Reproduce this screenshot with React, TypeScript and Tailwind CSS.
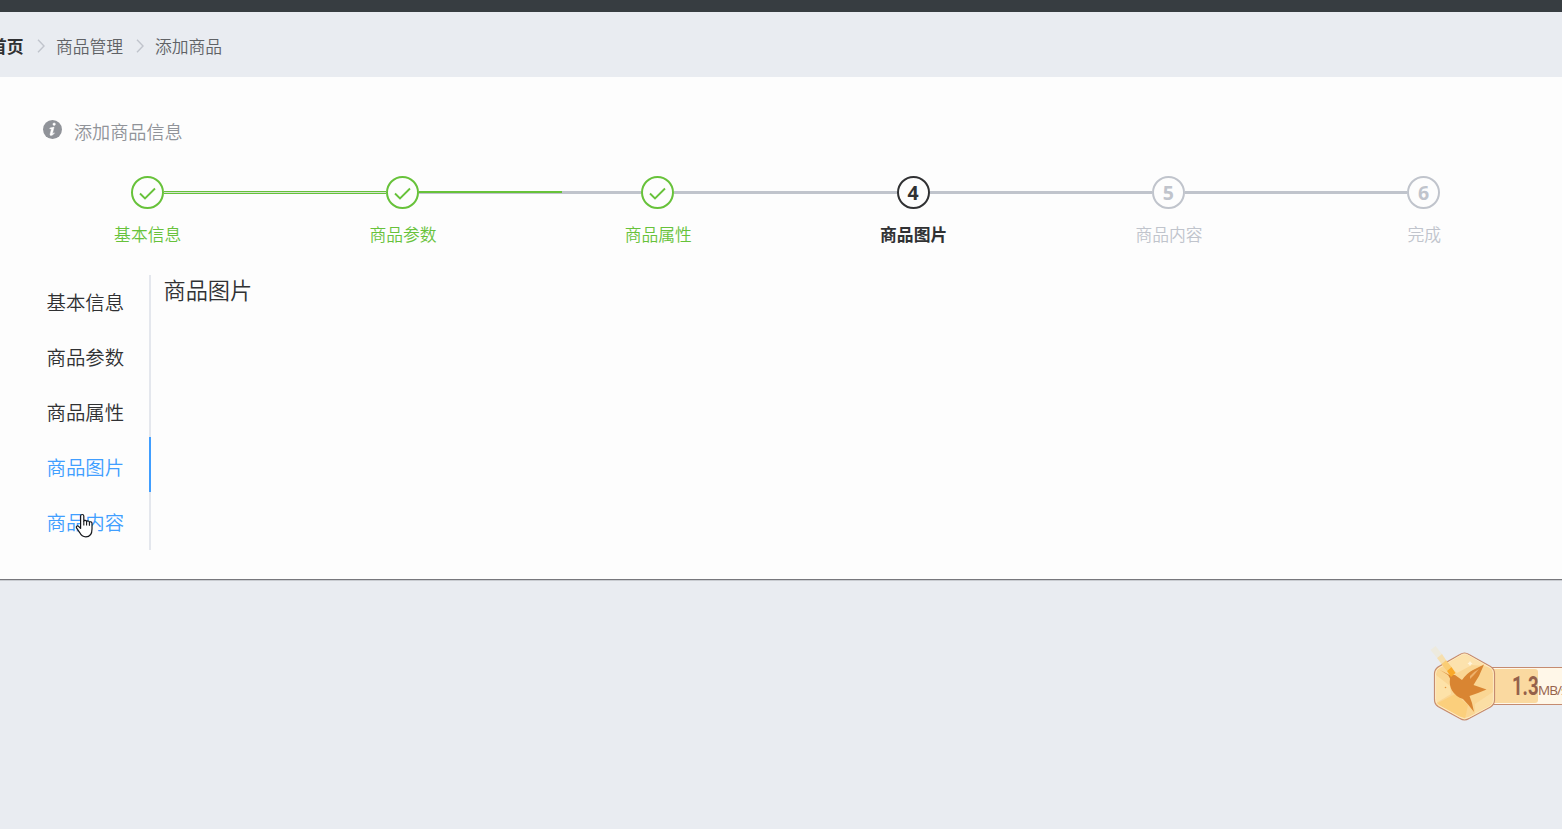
import type { ReactNode } from 'react';

type StepStatus = 'done' | 'active' | 'wait';

const steps: { title: string; status: StepStatus }[] = [
  { title: '基本信息', status: 'done' },
  { title: '商品参数', status: 'done' },
  { title: '商品属性', status: 'done' },
  { title: '商品图片', status: 'active' },
  { title: '商品内容', status: 'wait' },
  { title: '完成', status: 'wait' },
];

const tabs = ['基本信息', '商品参数', '商品属性', '商品图片', '商品内容'];

const circleStyles: Record<StepStatus, string> = {
  done: 'border-[#67c23a] text-[#67c23a]',
  active: 'border-[#303133] text-[#303133]',
  wait: 'border-[#c0c4cc] text-[#c0c4cc]',
};

const titleStyles: Record<StepStatus, string> = {
  done: 'font-[350] text-[#67c23a]',
  active: 'font-bold text-[#303133]',
  wait: 'font-[350] text-[#c0c4cc]',
};

function Chevron() {
  return (
    <svg width="8" height="14" viewBox="0 0 8 14" fill="none" className="shrink-0">
      <path d="M1 .8 7 7 1 13.2" stroke="#c0c4cc" strokeWidth="1.4" />
    </svg>
  );
}

function StepCircle({ status, children }: { status: StepStatus; children: ReactNode }) {
  return (
    <div
      className={`flex h-[33px] w-[33px] shrink-0 items-center justify-center rounded-full border-2 font-['Open_Sans','Noto_Sans',sans-serif] text-[19.5px] font-bold leading-none ${circleStyles[status]}`}
    >
      {children}
    </div>
  );
}

// Connector after step `index`; the second one is still part way through its fill
function StepLine({ index }: { index: number }) {
  return (
    <div className="h-[3px] flex-1 bg-[#c0c4cc]">
      {index === 0 && <div className="h-[3px] border-y border-[#67c23a] bg-[#d5e3d2]" />}
      {index === 1 && <div className="h-[2px] w-[143px] bg-[#67c23a]" />}
    </div>
  );
}

function HandCursor() {
  return (
    <svg width="20" height="26" viewBox="0 0 20 26" className="absolute left-[74px] top-[513px]">
      <path
        d="M6.600 3c0-2 3.200-2 3.200 0v5.200c.3-1.300 2.700-1.100 2.800.5.5-1.200 2.700-.9 2.800.6.7-1 2.600-.5 2.600 1.100v5.600c0 4.500-2 7.900-6.200 7.900-3.300 0-4.700-1.400-6.100-4.300l-3.200-4.700c-.8-1.600.9-2.600 2.100-1.500l2 2Z"
        fill="#fff"
        stroke="#15171c"
        strokeWidth="1.2"
        strokeLinejoin="round"
      />
      <path d="M9.800 8v4.400M12.600 9v3.600M15.400 9.600v3.200" stroke="#15171c" strokeWidth="1.1" />
    </svg>
  );
}

function SpeedWidget() {
  return (
    <div className="absolute left-[1426px] top-[645px] h-[80px] w-[136px] overflow-hidden">
      <div className="absolute left-[64px] top-[22px] flex h-[38px] w-[80px] border-y border-[#c58b70] bg-[#fff7e8] py-px">
        <div className="h-full w-[48px] rounded-r-[3px] bg-[#fad9a0]" />
      </div>
      <div className="absolute left-[86px] top-[28px] flex items-baseline whitespace-nowrap text-[#95614a]">
        <span className="inline-block w-[26px] origin-left scale-x-[0.74] font-['Roboto',sans-serif] text-[25px] font-bold leading-[28px]">
          1.3
        </span>
        <span className="font-['Open_Sans',sans-serif] text-[13.5px] leading-[28px] tracking-[-0.9px]">MB/s</span>
      </div>
      <svg width="72" height="80" viewBox="0 0 72 80" className="absolute left-0 top-0">
        <path
          d="M34 9.600Q38.500 6.400 43 9.600L64.500 21.600Q68.500 24 68.500 28.500V55Q68.500 59.500 64.500 62L43 73.500Q38.500 76.500 34 73.500L12 61.500Q8.500 59 8.500 54.500V29Q8.500 24.500 12 22Z"
          fill="#fad694"
          stroke="#c58b70"
          strokeWidth="1.2"
        />
        <path d="M34 11 38.500 9 65 23 58 21 46 20 31 28 21 19Z" fill="#fce2ad" />
        <path d="M10 30 24 41 25 49 10 58Z" fill="#fde2a8" />
        <path d="M10 59 29 49 42 60 39 74Z" fill="#fbcf7c" />
        <path d="M49 59 67 47 67 58 49 69Z" fill="#fbdea4" />
        <path
          d="M34 10.700Q38.500 7.600 43 10.700L64 22.500Q67.400 24.500 67.400 28.500V55Q67.400 59 64 61L43 72.300Q38.500 75 34 72.300L13 60.500Q9.600 58.500 9.600 54.500V29Q9.600 25 13 23Z"
          fill="none"
          stroke="#fdeac4"
          strokeWidth="1"
        />
        <path
          d="M14 25 23.500 30 29 30 36 35Q41 28 47 25L58 19.500 53 31 47.500 40 60.500 44.500 52 48 43.500 51 46 58 48 67Q42 59 37 54 30 52 26 45.500 23 40 24 33.500L22 30Z"
          fill="#d98532"
        />
        <path d="M4.500 5 9.500 1 16 9 11 13Z" fill="#edeade" />
        <path d="M11 13 16 9 20 15 15.500 19Z" fill="#f6dfae" />
        <path d="M15.500 19 20 15 25.500 22 21 26Z" fill="#facd75" />
        <path d="M21 26 25.500 22 29.500 28 25 32Z" fill="#faa928" />
        <path d="M44 31Q47 27 53 24L48 30 44 34Z" fill="#eeb16b" />
        <path d="m44 16 1 1.500 1.500 1-1.500 1-1 1.500-1-1.500-1.500-1 1.500-1Z" fill="#fff5dc" />
        <circle cx="19.500" cy="42.500" r=".8" fill="#e79a43" />
      </svg>
    </div>
  );
}

export default function App() {
  return (
    <div className="relative h-[829px] w-[1562px] overflow-hidden bg-[#e9ecf1] font-['Noto_Sans_CJK_SC',sans-serif]">
      <header className="h-3 bg-[#373d41]" />

      <nav className="flex h-[65px] items-center whitespace-nowrap pt-[3px] text-[16.8px] font-[350] leading-none text-[#606266]">
        <span className="-ml-[10px] w-[34px] shrink-0 font-bold text-[#303133]">首页</span>
        <span className="ml-[13px] mr-[11px] flex">
          <Chevron />
        </span>
        <span className="w-[67px]">商品管理</span>
        <span className="ml-[13px] mr-[11px] flex">
          <Chevron />
        </span>
        <span>添加商品</span>
      </nav>

      <main className="h-[503px] border-b border-[#77777c] bg-[#fdfdfd] shadow-[0_1px_0_#c9ccd1]">
        {/* Notice */}
        <div className="flex items-center pl-[43px] pt-[42px] text-[#909399]">
          <svg width="19" height="19" viewBox="0 0 19 19" className="mb-[3px] shrink-0">
            <circle cx="9.5" cy="9.5" r="9.5" fill="currentColor" />
            <path
              d="M11.300 2.900a1.300 1.300 0 1 1-.3 2.600 1.300 1.300 0 0 1 .3-2.600ZM6.800 8l4.300-.9-1.600 6.400c-.1.700.5.400 1.600-.8l.4.400c-1.800 2.800-5 3.300-4.400.8l1.300-4.900-1.600-.2Z"
              fill="#fff"
              stroke="#fff"
              strokeWidth=".4"
            />
          </svg>
          <span className="ml-3 text-[18.1px] leading-6 font-[350]">添加商品信息</span>
        </div>

        {/* Steps */}
        <div className="mt-[33px] flex items-center pl-[131px] pr-[122px]">
          {steps.map((step, i) => (
            <div key={step.title} className={i < steps.length - 1 ? 'flex flex-1 items-center' : 'flex items-center'}>
              <StepCircle status={step.status}>
                {step.status === 'done' ? (
                  <svg width="17" height="13" viewBox="0 0 17 13" fill="none" className="mt-[2px]">
                    <path d="m1 6.500 5 5L16 1.500" stroke="currentColor" strokeWidth="1.900" />
                  </svg>
                ) : (
                  i + 1
                )}
              </StepCircle>
              {i < steps.length - 1 && <StepLine index={i} />}
            </div>
          ))}
        </div>
        <div className="mt-[12px] grid grid-cols-6 pl-[20px] pr-[10px] text-center text-[16.8px] leading-[26px]">
          {steps.map((step) => (
            <span key={step.title} className={titleStyles[step.status]}>
              {step.title}
            </span>
          ))}
        </div>

        {/* Tabs */}
        <div className="mt-[28px] flex">
          <div className="flex w-[149px] flex-col text-[19.4px] font-[350] leading-[53px] text-[#303133]">
            {tabs.map((tab, i) => (
              <div key={tab} className={i >= 3 ? 'h-[55px] pl-[46.5px] text-[#409eff]' : 'h-[55px] pl-[46.5px]'}>
                {tab}
              </div>
            ))}
          </div>
          <div className="h-[275px] w-[2px] bg-[#e4e7ed] pt-[162px]">
            <div className="h-[55px] bg-[#409eff]" />
          </div>
          <div className="pl-[12.5px] text-[22.2px] font-[350] leading-[28px] text-[#303133]">商品图片</div>
        </div>
      </main>

      <HandCursor />
      <SpeedWidget />
    </div>
  );
}
